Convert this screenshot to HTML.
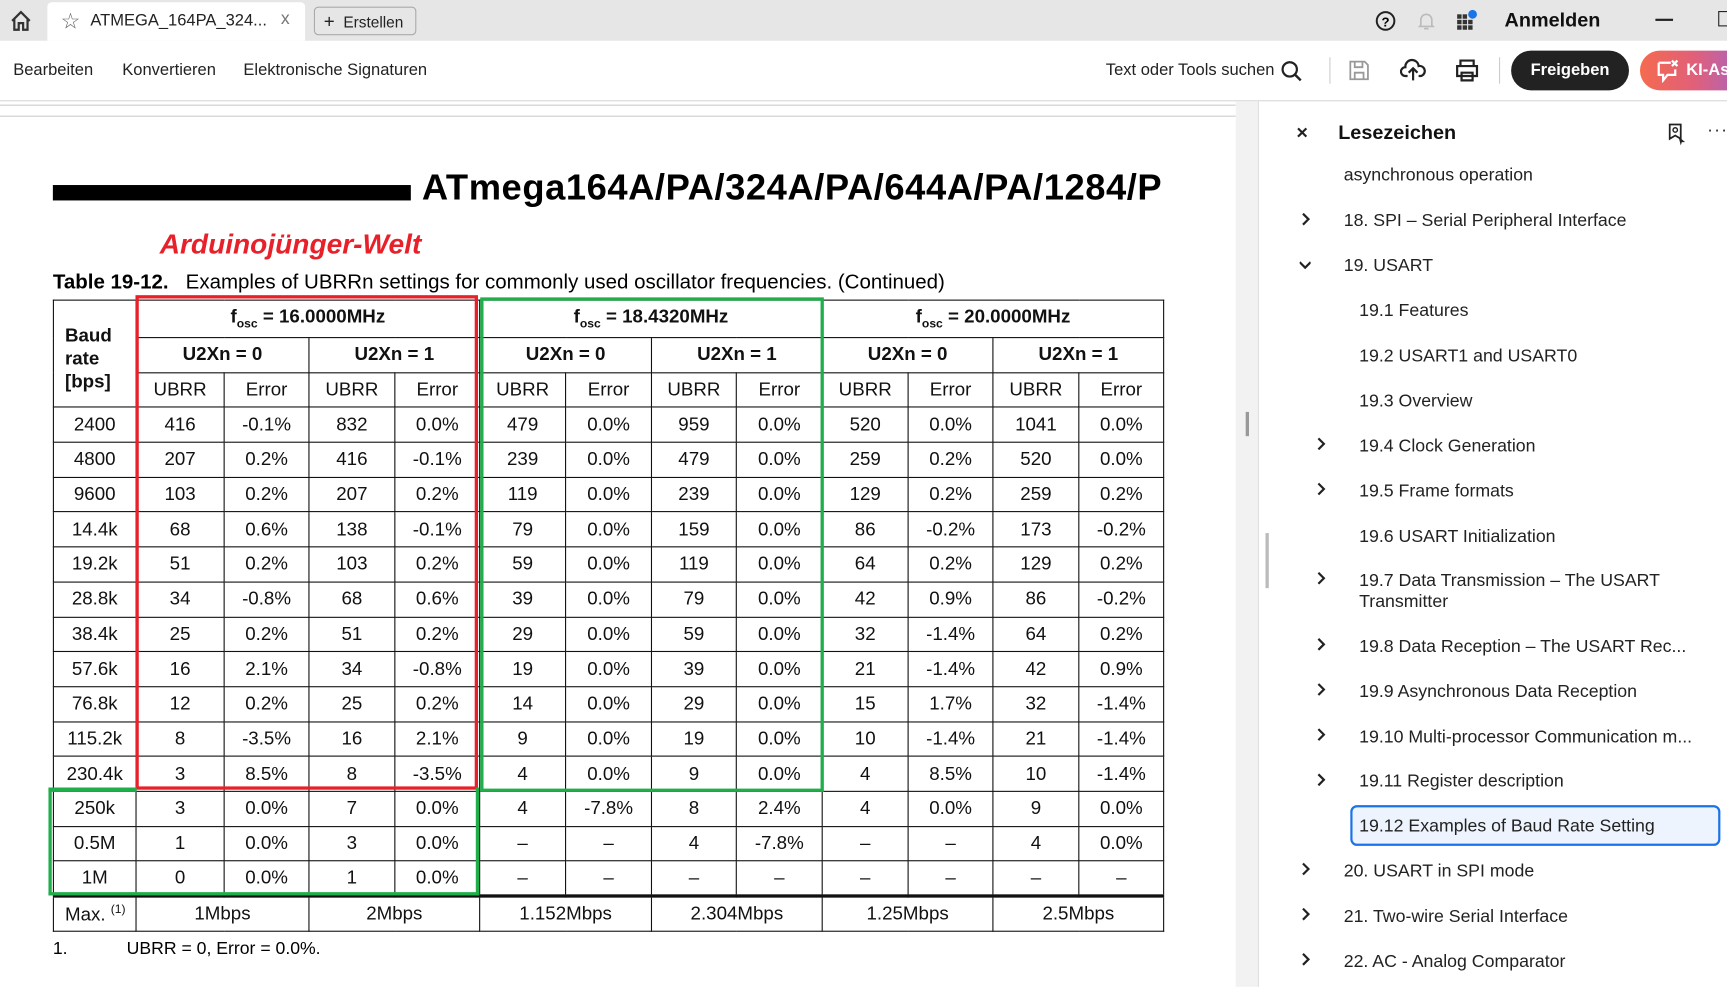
<!DOCTYPE html>
<html><head><meta charset="utf-8"><style>
*{margin:0;padding:0;box-sizing:border-box}
html,body{width:1727px;height:987px;overflow:hidden;background:#fff}
#w{position:absolute;left:0;top:0;width:1568px;height:896px;transform:scale(1.10140);transform-origin:0 0;font-family:"Liberation Sans",sans-serif;color:#222}
.a{position:absolute}
.tb{position:absolute;left:0;top:0;width:1568px;height:37px;background:#e6e6e6}
.side{font-size:16.1px;color:#222}
table{border-collapse:collapse;table-layout:fixed;font-size:17px;color:#111}
td{border:1px solid #111;text-align:center;padding:0;height:31.7px}
.h td{font-weight:bold}
.ch{position:absolute;width:10px;height:12px}
</style></head><body><div id="w">
<div class="tb"></div>
<svg class="a" style="left:8px;top:8px" width="22" height="22" viewBox="0 0 22 22"><path d="M3 11 L11 3 L19 11 M5 9 V19 H9 V13 H13 V19 H17 V9" fill="none" stroke="#333" stroke-width="2"/></svg>
<div class="a" style="left:43px;top:2px;width:234px;height:35px;background:#fff;border-radius:4px 4px 0 0"></div>
<div class="a" style="left:55px;top:7px;font-size:20px;color:#666">☆</div>
<div class="a" style="left:82px;top:10px;font-size:15px;color:#222">ATMEGA_164PA_324...</div>
<div class="a" style="left:255px;top:9px;font-size:16px;color:#777">x</div>
<div class="a" style="left:285px;top:6px;width:93px;height:26px;border:1px solid #aaa;border-radius:4px;font-size:14px;padding:3px 0 0 8px"><b style="font-size:17px;font-weight:normal">+</b>&nbsp; Erstellen</div>
<svg class="a" style="left:1248px;top:9px" width="20" height="20"><circle cx="10" cy="10" r="8" fill="none" stroke="#222" stroke-width="1.8"/><text x="10" y="15" font-size="12" text-anchor="middle" font-family="Liberation Sans" font-weight="bold">?</text></svg>
<svg class="a" style="left:1285px;top:9px" width="20" height="20"><path d="M5 14 V9 a5 5 0 0 1 10 0 V14 L16 15 H4 Z M8 17 h4" fill="none" stroke="#bbb" stroke-width="1.5"/></svg>
<svg class="a" style="left:1321px;top:8px" width="22" height="22"><g fill="#333"><rect x="2" y="5" width="4" height="4"/><rect x="7" y="5" width="4" height="4"/><rect x="2" y="10" width="4" height="4"/><rect x="7" y="10" width="4" height="4"/><rect x="12" y="10" width="4" height="4"/><rect x="2" y="15" width="4" height="4"/><rect x="7" y="15" width="4" height="4"/><rect x="12" y="15" width="4" height="4"/></g><circle cx="16" cy="5" r="4" fill="#1a73e8"/></svg>
<div class="a" style="left:1366px;top:8px;font-size:18px;font-weight:bold;color:#111">Anmelden</div>
<div class="a" style="left:1503px;top:17px;width:16px;height:2px;background:#222"></div>
<div class="a" style="left:1560px;top:10px;width:12px;height:14px;border:1.5px solid #222"></div>
<div class="a" style="left:12px;top:55px;font-size:15px">Bearbeiten</div>
<div class="a" style="left:111px;top:55px;font-size:15px">Konvertieren</div>
<div class="a" style="left:221px;top:55px;font-size:15px">Elektronische Signaturen</div>
<div class="a" style="left:1004px;top:55px;font-size:15px">Text oder Tools suchen</div>
<svg class="a" style="left:1162px;top:54px" width="22" height="22"><circle cx="9" cy="9" r="6.5" fill="none" stroke="#222" stroke-width="2"/><path d="M14 14 L19 19" stroke="#222" stroke-width="2.2"/></svg>
<div class="a" style="left:1207px;top:52px;width:1px;height:24px;background:#ccc"></div>
<svg class="a" style="left:1223px;top:53px" width="22" height="22"><path d="M3 3 H16 L19 6 V19 H3 Z M7 3 V8 H14 V3 M7 19 V13 H15 V19" fill="none" stroke="#999" stroke-width="1.6"/></svg>
<svg class="a" style="left:1271px;top:52px" width="24" height="24"><path d="M7 17 H5 a4 4 0 0 1 0-8 a6 6 0 0 1 12-1 a4 4 0 0 1 2 9 H17 M12 21 V11 M8 14 L12 10 L16 14" fill="none" stroke="#222" stroke-width="2"/></svg>
<svg class="a" style="left:1320px;top:53px" width="24" height="22"><path d="M6 7 V2 H18 V7 M3 7 H21 V16 H3 Z M7 13 H17 V20 H7 Z" fill="none" stroke="#222" stroke-width="2"/></svg>
<div class="a" style="left:1361px;top:52px;width:1px;height:24px;background:#ccc"></div>
<div class="a" style="left:1372px;top:46px;width:107px;height:36px;background:#222;border-radius:18px;color:#fff;font-weight:bold;font-size:15px;text-align:center;line-height:36px">Freigeben</div>
<div class="a" style="left:1489px;top:46px;width:100px;height:36px;background:linear-gradient(90deg,#f56a4f,#e0607a 50%,#a264c8);border-radius:18px;color:#fff;font-weight:bold;font-size:15px;line-height:36px;padding-left:42px">KI-As</div>
<svg class="a" style="left:1503px;top:53px" width="22" height="22"><path d="M3 4 H14 M3 4 V15 H7 V20 L11 15 H18 V10" fill="none" stroke="#fff" stroke-width="2"/><path d="M15 2 L20 7 M20 2 L15 7" stroke="#fff" stroke-width="2"/></svg>
<div class="a" style="left:0;top:91px;width:1568px;height:1px;background:#d8d8d8"></div>
<!-- doc -->
<div class="a" style="left:0;top:95px;width:1122px;height:1px;background:#ccc"></div>
<div class="a" style="left:0;top:105px;width:1122px;height:1px;background:#ccc"></div>
<div class="a" style="left:1122px;top:92px;width:20px;height:804px;background:#f2f2f2"></div>
<div class="a" style="left:1131px;top:374px;width:3px;height:22px;background:#999"></div>
<div class="a" style="left:1149px;top:484px;width:3px;height:50px;background:#bbb"></div>
<div class="a" style="left:1142px;top:92px;width:1px;height:804px;background:#ddd"></div>
<div class="a" style="left:48px;top:168px;width:325px;height:14px;background:#000"></div>
<div class="a" style="left:383px;top:151px;font-size:33px;letter-spacing:0.5px;font-weight:bold;color:#000">ATmega164A/PA/324A/PA/644A/PA/1284/P</div>
<div class="a" style="left:145px;top:208px;font-size:25.5px;font-weight:bold;font-style:italic;color:#e8202a">Arduinojünger-Welt</div>
<div class="a" style="left:48px;top:245px;font-size:18.6px;color:#000"><b>Table 19-12.</b>&nbsp;&nbsp; Examples of UBRRn settings for commonly used oscillator frequencies. (Continued)</div>
<table class="a" style="left:48px;top:272px;width:1008px">
<colgroup><col style="width:75px"><col style="width:80px"><col style="width:77px"><col style="width:78px"><col style="width:77px"><col style="width:78px"><col style="width:78px"><col style="width:77px"><col style="width:78px"><col style="width:78px"><col style="width:77px"><col style="width:78px"><col style="width:77px"></colgroup>
<tr class="h" style="height:34px"><td rowspan="3" style="text-align:left;padding-left:10px;padding-top:8px;line-height:21px">Baud<br>rate<br>[bps]</td><td colspan="4">f<sub style="font-size:11px">osc</sub> = 16.0000MHz</td><td colspan="4">f<sub style="font-size:11px">osc</sub> = 18.4320MHz</td><td colspan="4">f<sub style="font-size:11px">osc</sub> = 20.0000MHz</td></tr>
<tr class="h" style="height:31px"><td colspan="2">U2Xn = 0</td><td colspan="2">U2Xn = 1</td><td colspan="2">U2Xn = 0</td><td colspan="2">U2Xn = 1</td><td colspan="2">U2Xn = 0</td><td colspan="2">U2Xn = 1</td></tr>
<tr style="height:31px"><td>UBRR</td><td>Error</td><td>UBRR</td><td>Error</td><td>UBRR</td><td>Error</td><td>UBRR</td><td>Error</td><td>UBRR</td><td>Error</td><td>UBRR</td><td>Error</td></tr>
<tr><td>2400</td><td>416</td><td>-0.1%</td><td>832</td><td>0.0%</td><td>479</td><td>0.0%</td><td>959</td><td>0.0%</td><td>520</td><td>0.0%</td><td>1041</td><td>0.0%</td></tr>
<tr><td>4800</td><td>207</td><td>0.2%</td><td>416</td><td>-0.1%</td><td>239</td><td>0.0%</td><td>479</td><td>0.0%</td><td>259</td><td>0.2%</td><td>520</td><td>0.0%</td></tr>
<tr><td>9600</td><td>103</td><td>0.2%</td><td>207</td><td>0.2%</td><td>119</td><td>0.0%</td><td>239</td><td>0.0%</td><td>129</td><td>0.2%</td><td>259</td><td>0.2%</td></tr>
<tr><td>14.4k</td><td>68</td><td>0.6%</td><td>138</td><td>-0.1%</td><td>79</td><td>0.0%</td><td>159</td><td>0.0%</td><td>86</td><td>-0.2%</td><td>173</td><td>-0.2%</td></tr>
<tr><td>19.2k</td><td>51</td><td>0.2%</td><td>103</td><td>0.2%</td><td>59</td><td>0.0%</td><td>119</td><td>0.0%</td><td>64</td><td>0.2%</td><td>129</td><td>0.2%</td></tr>
<tr><td>28.8k</td><td>34</td><td>-0.8%</td><td>68</td><td>0.6%</td><td>39</td><td>0.0%</td><td>79</td><td>0.0%</td><td>42</td><td>0.9%</td><td>86</td><td>-0.2%</td></tr>
<tr><td>38.4k</td><td>25</td><td>0.2%</td><td>51</td><td>0.2%</td><td>29</td><td>0.0%</td><td>59</td><td>0.0%</td><td>32</td><td>-1.4%</td><td>64</td><td>0.2%</td></tr>
<tr><td>57.6k</td><td>16</td><td>2.1%</td><td>34</td><td>-0.8%</td><td>19</td><td>0.0%</td><td>39</td><td>0.0%</td><td>21</td><td>-1.4%</td><td>42</td><td>0.9%</td></tr>
<tr><td>76.8k</td><td>12</td><td>0.2%</td><td>25</td><td>0.2%</td><td>14</td><td>0.0%</td><td>29</td><td>0.0%</td><td>15</td><td>1.7%</td><td>32</td><td>-1.4%</td></tr>
<tr><td>115.2k</td><td>8</td><td>-3.5%</td><td>16</td><td>2.1%</td><td>9</td><td>0.0%</td><td>19</td><td>0.0%</td><td>10</td><td>-1.4%</td><td>21</td><td>-1.4%</td></tr>
<tr><td>230.4k</td><td>3</td><td>8.5%</td><td>8</td><td>-3.5%</td><td>4</td><td>0.0%</td><td>9</td><td>0.0%</td><td>4</td><td>8.5%</td><td>10</td><td>-1.4%</td></tr>
<tr><td>250k</td><td>3</td><td>0.0%</td><td>7</td><td>0.0%</td><td>4</td><td>-7.8%</td><td>8</td><td>2.4%</td><td>4</td><td>0.0%</td><td>9</td><td>0.0%</td></tr>
<tr><td>0.5M</td><td>1</td><td>0.0%</td><td>3</td><td>0.0%</td><td>–</td><td>–</td><td>4</td><td>-7.8%</td><td>–</td><td>–</td><td>4</td><td>0.0%</td></tr>
<tr><td>1M</td><td>0</td><td>0.0%</td><td>1</td><td>0.0%</td><td>–</td><td>–</td><td>–</td><td>–</td><td>–</td><td>–</td><td>–</td><td>–</td></tr>
<tr style="border-top:3px solid #111"><td style="text-align:left;padding-left:10px">Max. <sup style="font-size:11px">(1)</sup></td><td colspan="2">1Mbps</td><td colspan="2">2Mbps</td><td colspan="2">1.152Mbps</td><td colspan="2">2.304Mbps</td><td colspan="2">1.25Mbps</td><td colspan="2">2.5Mbps</td></tr>
</table>
<div class="a" style="left:123px;top:268px;width:311px;height:449px;border:3.5px solid #e8202a"></div>
<div class="a" style="left:436px;top:270px;width:312px;height:449px;border:3.5px solid #1fae4a"></div>
<div class="a" style="left:44px;top:715px;width:391px;height:98px;border:3.5px solid #1fae4a;border-top:none"></div>
<div class="a" style="left:44px;top:715px;width:80px;height:3.5px;background:#1fae4a"></div>
<div class="a" style="left:48px;top:853px;font-size:16px;color:#000">1.</div>
<div class="a" style="left:115px;top:853px;font-size:16px;color:#000">UBRR = 0, Error = 0.0%.</div>
<!-- sidebar -->
<div class="a" style="left:1177px;top:110px;font-size:18px;font-weight:bold">×</div>
<div class="a" style="left:1215px;top:110px;font-size:18px;font-weight:bold;color:#111">Lesezeichen</div>
<svg class="a" style="left:1513px;top:111px" width="20" height="22"><path d="M3 2 H13 V15 L8 12 L3 15 Z" fill="none" stroke="#222" stroke-width="1.6"/><circle cx="8" cy="7" r="2" fill="none" stroke="#222" stroke-width="1.3"/><path d="M11 13 L17 18 L14 18 L13 21 Z" fill="#222"/></svg>
<div class="a" style="left:1550px;top:110px;font-size:16px;letter-spacing:1px">···</div>
<svg width="0" height="0" style="position:absolute"><defs><path id="cr" d="M3 1 L8 6 L3 11" fill="none" stroke="#222" stroke-width="2"/><path id="cd" d="M0 3 L5 8 L10 3" fill="none" stroke="#222" stroke-width="2"/></defs></svg>
<div class="side">
<div class="a" style="left:1220px;top:150px">asynchronous operation</div>
<svg class="ch" style="left:1180px;top:193px"><use href="#cr"/></svg><div class="a" style="left:1220px;top:191px">18. SPI – Serial Peripheral Interface</div>
<svg class="ch" style="left:1180px;top:235px"><use href="#cd"/></svg><div class="a" style="left:1220px;top:232px">19. USART</div>
<div class="a" style="left:1234px;top:273px">19.1 Features</div>
<div class="a" style="left:1234px;top:314px">19.2 USART1 and USART0</div>
<div class="a" style="left:1234px;top:355px">19.3 Overview</div>
<svg class="ch" style="left:1194px;top:397px"><use href="#cr"/></svg><div class="a" style="left:1234px;top:396px">19.4 Clock Generation</div>
<svg class="ch" style="left:1194px;top:438px"><use href="#cr"/></svg><div class="a" style="left:1234px;top:437px">19.5 Frame formats</div>
<div class="a" style="left:1234px;top:478px">19.6 USART Initialization</div>
<svg class="ch" style="left:1194px;top:519px"><use href="#cr"/></svg><div class="a" style="left:1234px;top:518px;line-height:19px">19.7 Data Transmission – The USART<br>Transmitter</div>
<svg class="ch" style="left:1194px;top:579px"><use href="#cr"/></svg><div class="a" style="left:1234px;top:578px">19.8 Data Reception – The USART Rec...</div>
<svg class="ch" style="left:1194px;top:620px"><use href="#cr"/></svg><div class="a" style="left:1234px;top:619px">19.9 Asynchronous Data Reception</div>
<svg class="ch" style="left:1194px;top:661px"><use href="#cr"/></svg><div class="a" style="left:1234px;top:660px">19.10 Multi-processor Communication m...</div>
<svg class="ch" style="left:1194px;top:702px"><use href="#cr"/></svg><div class="a" style="left:1234px;top:700px">19.11 Register description</div>
<div class="a" style="left:1226px;top:731px;width:336px;height:37px;border:2.5px solid #1a73e8;border-radius:6px;background:#eef4fd"></div>
<div class="a" style="left:1234px;top:741px">19.12 Examples of Baud Rate Setting</div>
<svg class="ch" style="left:1180px;top:783px"><use href="#cr"/></svg><div class="a" style="left:1220px;top:782px">20. USART in SPI mode</div>
<svg class="ch" style="left:1180px;top:824px"><use href="#cr"/></svg><div class="a" style="left:1220px;top:823px">21. Two-wire Serial Interface</div>
<svg class="ch" style="left:1180px;top:865px"><use href="#cr"/></svg><div class="a" style="left:1220px;top:864px">22. AC - Analog Comparator</div>
</div>
</div></body></html>
